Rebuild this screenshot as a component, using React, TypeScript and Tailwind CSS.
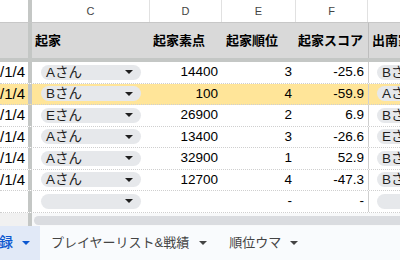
import React from "react";

type Row = { date: string; c: string; d: string; e: string; f: string; g: string; hl?: boolean };

const rows: Row[] = [
  { date: "2024/1/4", c: "Aさん", d: "14400", e: "3", f: "-25.6", g: "Bさん" },
  { date: "2024/1/4", c: "Bさん", d: "100", e: "4", f: "-59.9", g: "Aさん", hl: true },
  { date: "2024/1/4", c: "Eさん", d: "26900", e: "2", f: "6.9", g: "Bさん" },
  { date: "2024/1/4", c: "Aさん", d: "13400", e: "3", f: "-26.6", g: "Eさん" },
  { date: "2024/1/4", c: "Aさん", d: "32900", e: "1", f: "52.9", g: "Bさん" },
  { date: "2024/1/4", c: "Aさん", d: "12700", e: "4", f: "-47.3", g: "Bさん" },
  { date: "", c: "", d: "", e: "-", f: "-", g: "" },
];

function Caret({ className }: { className?: string }) {
  return (
    <svg width="8" height="4" viewBox="0 0 8 4" className={className}>
      <polygon points="0,0 8,0 4,4" fill="currentColor" />
    </svg>
  );
}

function Chip({ label }: { label: string }) {
  return (
    <div className="flex h-[15px] w-[100px] shrink-0 items-center justify-between rounded-full bg-[#e6e8eb] pl-[5px] pr-[8px]">
      <span className="text-[13.5px] leading-none text-[#1f1f1f]">{label}</span>
      <Caret className="text-[#1f1f1f]" />
    </div>
  );
}

export default function App() {
  return (
    <div
      className="flex h-[260px] w-[400px] flex-col overflow-hidden bg-white"
      style={{ fontFamily: '"Liberation Sans", "Noto Sans CJK JP", sans-serif' }}
    >
      {/* column letters */}
      <div className="flex h-[23px] shrink-0 border-b border-[#c7c7c7] text-[11px] text-[#444]">
        <div className="w-[28px] shrink-0" />
        <div className="w-[4px] shrink-0 bg-[#c4c7c5]" />
        <div className="flex w-[118px] shrink-0 items-center justify-center border-r border-[#e1e1e1]">C</div>
        <div className="flex w-[72px] shrink-0 items-center justify-center border-r border-[#e1e1e1]">D</div>
        <div className="flex w-[74px] shrink-0 items-center justify-center border-r border-[#e1e1e1]">E</div>
        <div className="flex w-[72px] shrink-0 items-center justify-center border-r border-[#e1e1e1]">F</div>
        <div className="flex-1" />
      </div>

      {/* frozen header row */}
      <div className="flex h-[35px] shrink-0 bg-[#d9d9d9] text-[13px] font-bold text-black">
        <div className="w-[28px] shrink-0" />
        <div className="w-[4px] shrink-0 bg-[#c4c7c5]" />
        <div className="flex w-[118px] shrink-0 items-center pl-[3px]">起家</div>
        <div className="flex w-[72px] shrink-0 items-center pl-[3px]">起家素点</div>
        <div className="flex w-[74px] shrink-0 items-center pl-[4px]">起家順位</div>
        <div className="flex w-[72px] shrink-0 items-center pl-[2px]">起家スコア</div>
        <div className="flex flex-1 items-center whitespace-nowrap border-l border-[#bdbdbd] pl-[3px]">出南家</div>
      </div>
      <div className="h-[4px] shrink-0 bg-[#c4c7c5]" />

      {/* data rows */}
      <div className="flex shrink-0 flex-col text-[13.5px] text-black">
        {rows.map((r, i) => (
          <div
            key={i}
            className={`flex h-[21.5px] shrink-0 border-b border-dotted border-[#cfcfcf] ${r.hl ? "bg-[#ffe599]" : "bg-white"}`}
          >
            <div className="flex w-[28px] shrink-0 items-center justify-end overflow-hidden whitespace-nowrap pr-[3px] text-[15px]">
              {r.date}
            </div>
            <div className="w-[4px] shrink-0 bg-[#c4c7c5]" />
            <div className="flex w-[118px] shrink-0 items-center pl-[9px]">
              <Chip label={r.c} />
            </div>
            <div className="flex w-[72px] shrink-0 items-center justify-end pr-[4px]">{r.d}</div>
            <div className="flex w-[74px] shrink-0 items-center justify-end pr-[4px]">{r.e}</div>
            <div className="flex w-[72px] shrink-0 items-center justify-end pr-[4px]">{r.f}</div>
            <div className="flex flex-1 items-center overflow-hidden border-l border-[#cfcfcf] pl-[8px]">
              <Chip label={r.g} />
            </div>
          </div>
        ))}
      </div>

      {/* horizontal scrollbar */}
      <div className="flex h-[13px] shrink-0">
        <div className="w-[28px] shrink-0 bg-[#f1f1f1]" />
        <div className="w-[4px] shrink-0 bg-[#c4c7c5]" />
        <div className="flex-1 bg-[#f8f9fa] pl-[2px] pt-[3px]">
          <div className="h-[9px] rounded-l-full bg-[#dadce0]" />
        </div>
      </div>

      {/* sheet tabs */}
      <div className="flex flex-1 items-center bg-[#f9fbfd] text-[13px]">
        <div className="flex h-full w-[40px] shrink-0 items-center gap-[9px] bg-[#e1e9f7] text-[#0b57d0]">
          <span className="-ml-[1px] text-[14px] font-medium">録</span>
          <Caret />
        </div>
        <div className="ml-[11px] flex items-center gap-[10px] text-[#444]">
          <span>プレイヤーリスト&amp;戦績</span>
          <Caret />
        </div>
        <div className="ml-[22px] flex items-center gap-[9px] text-[#444]">
          <span>順位ウマ</span>
          <Caret />
        </div>
      </div>
    </div>
  );
}
